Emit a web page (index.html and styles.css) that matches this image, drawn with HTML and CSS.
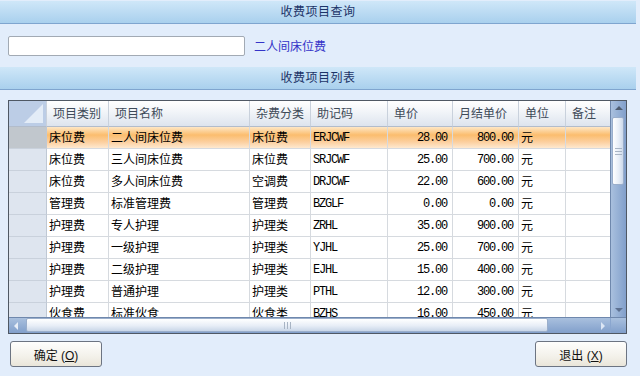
FILE: index.html
```html
<!DOCTYPE html>
<html lang="zh-CN">
<head>
    <meta charset="UTF-8">
    <title>收费项目查询</title>
    <link rel="stylesheet" href="styles.css">
</head>
<body>

    <div class="bar">收费项目查询</div>

    <div class="search">
        <input type="text" class="search-input">
        <span class="hint">二人间床位费</span>
    </div>

    <div class="bar">收费项目列表</div>

    <div class="grid">
        <div class="grid-main">
            <div class="grid-view">
                <table class="items">
                    <colgroup>
                        <col class="c-head">
                        <col class="c-type">
                        <col class="c-name">
                        <col class="c-cat">
                        <col class="c-code">
                        <col class="c-price">
                        <col class="c-month">
                        <col class="c-unit">
                        <col class="c-note">
                    </colgroup>
                    <thead>
                        <tr>
                            <th class="corner-cell"><span class="corner-mark"></span></th>
                            <th>项目类别</th>
                            <th>项目名称</th>
                            <th>杂费分类</th>
                            <th>助记码</th>
                            <th>单价</th>
                            <th>月结单价</th>
                            <th>单位</th>
                            <th>备注</th>
                        </tr>
                    </thead>
                    <tbody>
                        <tr class="selected">
                            <td class="row-head"></td><td>床位费</td><td>二人间床位费</td><td>床位费</td>
                            <td class="mono">ERJCWF</td><td class="mono num">28.00</td><td class="mono num">800.00</td><td>元</td><td></td>
                        </tr>
                        <tr>
                            <td class="row-head"></td><td>床位费</td><td>三人间床位费</td><td>床位费</td>
                            <td class="mono">SRJCWF</td><td class="mono num">25.00</td><td class="mono num">700.00</td><td>元</td><td></td>
                        </tr>
                        <tr>
                            <td class="row-head"></td><td>床位费</td><td>多人间床位费</td><td>空调费</td>
                            <td class="mono">DRJCWF</td><td class="mono num">22.00</td><td class="mono num">600.00</td><td>元</td><td></td>
                        </tr>
                        <tr>
                            <td class="row-head"></td><td>管理费</td><td>标准管理费</td><td>管理费</td>
                            <td class="mono">BZGLF</td><td class="mono num">0.00</td><td class="mono num">0.00</td><td>元</td><td></td>
                        </tr>
                        <tr>
                            <td class="row-head"></td><td>护理费</td><td>专人护理</td><td>护理类</td>
                            <td class="mono">ZRHL</td><td class="mono num">35.00</td><td class="mono num">900.00</td><td>元</td><td></td>
                        </tr>
                        <tr>
                            <td class="row-head"></td><td>护理费</td><td>一级护理</td><td>护理类</td>
                            <td class="mono">YJHL</td><td class="mono num">25.00</td><td class="mono num">700.00</td><td>元</td><td></td>
                        </tr>
                        <tr>
                            <td class="row-head"></td><td>护理费</td><td>二级护理</td><td>护理类</td>
                            <td class="mono">EJHL</td><td class="mono num">15.00</td><td class="mono num">400.00</td><td>元</td><td></td>
                        </tr>
                        <tr>
                            <td class="row-head"></td><td>护理费</td><td>普通护理</td><td>护理类</td>
                            <td class="mono">PTHL</td><td class="mono num">12.00</td><td class="mono num">300.00</td><td>元</td><td></td>
                        </tr>
                        <tr>
                            <td class="row-head"></td><td>伙食费</td><td>标准伙食</td><td>伙食类</td>
                            <td class="mono">BZHS</td><td class="mono num">16.00</td><td class="mono num">450.00</td><td>元</td><td></td>
                        </tr>
                    </tbody>
                </table>
            </div>

            <!-- vertical scrollbar -->
            <div class="vscroll">
                <div class="arrow arrow-up"></div>
                <div class="vthumb"><span class="grip-h"></span></div>
                <div class="vtrack"></div>
                <div class="arrow arrow-down"></div>
            </div>
        </div>

        <!-- horizontal scrollbar -->
        <div class="hscroll-row">
            <div class="arrow arrow-left"></div>
            <div class="hthumb"><span class="grip-v"></span></div>
            <div class="htrack"></div>
            <div class="arrow arrow-right"></div>
            <div class="scroll-corner"></div>
        </div>
    </div>

    <div class="actions">
        <button type="button" class="btn">确定 (<u>O</u>)</button>
        <button type="button" class="btn">退出 (<u>X</u>)</button>
    </div>

</body>
</html>
```

FILE: styles.css
```css
/* Page */
body {
    margin: 0;
    width: 640px;
    height: 376px;
    overflow: hidden;
    background: #e2edfb;
    font-family: 'Liberation Sans', 'Noto Sans CJK SC', sans-serif;
    font-size: 12px;
    color: #000;
}

/* Section title bars */
.bar {
    height: 22px;
    margin-right: 4px;
    line-height: 22px;
    text-align: center;
    color: #1c3468;
    letter-spacing: 0.5px;
    background: linear-gradient(to bottom, #cfe7f8, #a9d0ed);
    border-bottom: 1px solid #7fa5cf;
}

.bar:first-child {
    margin-top: 1px;
}

/* Search line */
.search {
    height: 43px;
    display: flex;
    align-items: center;
    padding-left: 8px;
    gap: 9px;
}

.search-input {
    box-sizing: border-box;
    width: 237px;
    height: 20px;
    margin: 1px 0 0;
    border: 1px solid #a2aab4;
    border-radius: 2px;
    background: #fff;
}

.hint {
    color: #3434c8;
}

/* Data grid */
.grid {
    margin: 10px 13px 0 8px;
    height: 232px;
    border: 1px solid #4f5864;
    background: #fff;
    display: flex;
    flex-direction: column;
}

.grid-main {
    height: 216px;
    display: flex;
}

.grid-view {
    width: 603px;
    overflow: hidden;
}

.items {
    table-layout: fixed;
    width: 602px;
    border-collapse: separate;
    border-spacing: 0;
}

.c-head  { width: 38px; }
.c-type  { width: 62px; }
.c-name  { width: 141px; }
.c-cat   { width: 61px; }
.c-code  { width: 77px; }
.c-price { width: 65px; }
.c-month { width: 66px; }
.c-unit  { width: 47px; }
.c-note  { width: 45px; }

.items th {
    box-sizing: border-box;
    height: 26px;
    padding: 0 0 0 6px;
    line-height: 14px;
    text-align: left;
    font-weight: normal;
    color: #3e4a58;
    background: linear-gradient(to bottom, #ffffff, #f1f4f8 45%, #dde4ee);
    border-right: 1px solid #c9d1dc;
    border-bottom: 1px solid #b2bccb;
    white-space: nowrap;
}

.items th.corner-cell {
    position: relative;
    padding: 0;
    background: #bccde6;
}

.corner-mark {
    position: absolute;
    right: 3px;
    bottom: 3px;
    width: 0;
    height: 0;
    border-left: 19px solid transparent;
    border-bottom: 19px solid #e3ecf7;
}

.items td {
    box-sizing: border-box;
    height: 22px;
    padding: 0 2px;
    line-height: 14px;
    border-right: 1px solid #d6dadf;
    border-bottom: 1px solid #d6dadf;
    white-space: nowrap;
    overflow: hidden;
}

.items td.row-head {
    background: #dee5ef;
    border-right: 1px solid #bfc8d4;
    border-bottom: 1px solid #c9d1dc;
}

.items tr.selected td {
    background: linear-gradient(to bottom, #fee7c6 0%, #fbbd6e 38%, #fcd0a0 72%, #fee9d0 100%);
}

.items tr.selected td.row-head {
    background: #c1c7cd;
}

.mono {
    font-family: 'Liberation Mono', monospace;
    letter-spacing: -1.2px;
}

.items td.num {
    text-align: right;
    padding-right: 5px;
}

/* Scrollbars */
.vscroll {
    width: 15px;
    display: flex;
    flex-direction: column;
    background: linear-gradient(to right, #a9c0de, #819fcb);
    border-left: 1px solid #6f88ad;
}

.arrow {
    position: relative;
    flex: none;
    width: 15px;
    height: 16px;
}

.arrow::after {
    content: "";
    position: absolute;
    width: 0;
    height: 0;
}

.arrow-up::after {
    left: 4px;
    top: 5px;
    border-left: 4px solid transparent;
    border-right: 4px solid transparent;
    border-bottom: 4px solid #4e5c70;
}

.arrow-down::after {
    left: 4px;
    top: 7px;
    border-left: 4px solid transparent;
    border-right: 4px solid transparent;
    border-top: 4px solid #5d7090;
}

.vthumb {
    flex: none;
    height: 66px;
    margin: 0 2px 0 1px;
    display: flex;
    align-items: center;
    justify-content: center;
    background: linear-gradient(to right, #ffffff, #e6edf7 60%, #cdd9ea);
    border: 1px solid #9aaecb;
    border-radius: 2px;
}

.grip-h {
    width: 7px;
    height: 5px;
    border-top: 1px solid #a8b4c4;
    border-bottom: 1px solid #a8b4c4;
    background: linear-gradient(#a8b4c4, #a8b4c4) center / 7px 1px no-repeat;
}

.vtrack {
    flex: 1;
}

.hscroll-row {
    height: 16px;
    display: flex;
    background: linear-gradient(to bottom, #a9c0de, #819fcb);
    border-top: 1px solid #6f88ad;
}

.hscroll-row .arrow {
    width: 16px;
    height: 15px;
}

.arrow-left::after {
    left: 5px;
    top: 4px;
    border-top: 4px solid transparent;
    border-bottom: 4px solid transparent;
    border-right: 4px solid #e8eef7;
}

.arrow-right::after {
    left: 7px;
    top: 4px;
    border-top: 4px solid transparent;
    border-bottom: 4px solid transparent;
    border-left: 4px solid #dce6f4;
}

.hthumb {
    flex: none;
    width: 520px;
    margin: 0 0 1px 1px;
    display: flex;
    align-items: center;
    justify-content: center;
    background: linear-gradient(to bottom, #ffffff, #e8eef7 55%, #c9d6e8);
    border: 1px solid #9aaecb;
    border-radius: 2px;
}

.grip-v {
    width: 5px;
    height: 7px;
    border-left: 1px solid #a8b4c4;
    border-right: 1px solid #a8b4c4;
    background: linear-gradient(#a8b4c4, #a8b4c4) center / 1px 7px no-repeat;
}

.htrack {
    flex: 1;
}

.scroll-corner {
    width: 15px;
    border-left: 1px solid #8aa6cf;
}

/* Bottom buttons */
.actions {
    display: flex;
    justify-content: space-between;
    margin: 7px 13px 0 10px;
}

.btn {
    box-sizing: border-box;
    width: 92px;
    height: 26px;
    padding: 0;
    font-family: 'Liberation Sans', 'Noto Sans CJK SC', sans-serif;
    font-size: 12px;
    color: #111;
    background: linear-gradient(to bottom, #fefefd, #f3f1ea 60%, #e9e5d9);
    border: 1px solid #6c7482;
    border-radius: 3px;
}

.btn u {
    text-underline-offset: 1px;
}
```
